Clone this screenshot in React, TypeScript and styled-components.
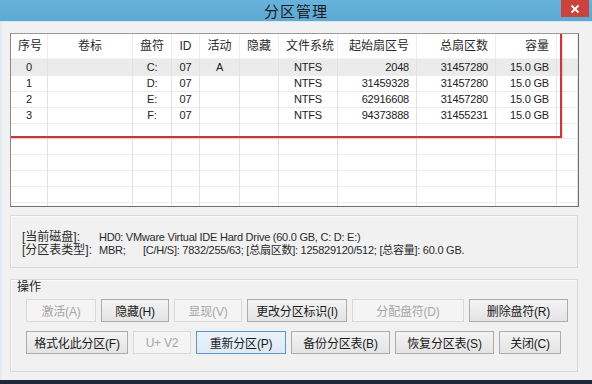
import styled, { createGlobalStyle } from 'styled-components';

const GlobalStyle = createGlobalStyle`
  body {
    margin: 0;
    background: #f0f0f0;
    font-family: 'Liberation Sans', 'Noto Sans CJK SC', sans-serif;
  }
`;

type Align = 'left' | 'center' | 'right';

const columns: { title: string; width: string; head: Align; cell: Align }[] = [
  { title: '序号', width: '37px', head: 'left', cell: 'center' },
  { title: '卷标', width: '85px', head: 'center', cell: 'center' },
  { title: '盘符', width: '39px', head: 'center', cell: 'center' },
  { title: 'ID', width: '28px', head: 'center', cell: 'center' },
  { title: '活动', width: '40px', head: 'center', cell: 'center' },
  { title: '隐藏', width: '39px', head: 'center', cell: 'center' },
  { title: '文件系统', width: '59px', head: 'center', cell: 'center' },
  { title: '起始扇区号', width: '79px', head: 'right', cell: 'right' },
  { title: '总扇区数', width: '79px', head: 'right', cell: 'right' },
  { title: '容量', width: '61px', head: 'right', cell: 'right' },
  { title: '', width: '1fr', head: 'left', cell: 'left' },
];

const gridCols = columns.map((c) => c.width).join(' ');

const partitions = [
  ['0', '', 'C:', '07', 'A', '', 'NTFS', '2048', '31457280', '15.0 GB', ''],
  ['1', '', 'D:', '07', '', '', 'NTFS', '31459328', '31457280', '15.0 GB', ''],
  ['2', '', 'E:', '07', '', '', 'NTFS', '62916608', '31457280', '15.0 GB', ''],
  ['3', '', 'F:', '07', '', '', 'NTFS', '94373888', '31455231', '15.0 GB', ''],
];

const emptyRows = 6;

const App = () => {
  return (
    <>
      <GlobalStyle />
      <Window>
        <TitleBar>
          <span />
          <Title>分区管理</Title>
          <CloseButton>
            <svg width="10" height="10" viewBox="0 0 10 10">
              <path d="M1.5 1.5 L8.5 8.5 M8.5 1.5 L1.5 8.5" stroke="#fff" strokeWidth="1.8" />
            </svg>
          </CloseButton>
        </TitleBar>
        <Body>
          <ListView>
            <HeaderRow>
              {columns.map((c, i) => (
                <HeadCell key={i} $align={c.head}>
                  {c.title}
                </HeadCell>
              ))}
            </HeaderRow>
            {partitions.map((row, r) => (
              <Row key={r} $selected={r === 0}>
                {row.map((v, i) => (
                  <Cell key={i} $align={columns[i].cell}>
                    {v}
                  </Cell>
                ))}
              </Row>
            ))}
            {Array.from({ length: emptyRows }).map((_, r) => (
              <Row key={'e' + r}>
                {columns.map((c, i) => (
                  <Cell key={i} $align={c.cell} />
                ))}
              </Row>
            ))}
            <Highlight />
          </ListView>

          <InfoGroup>
            <InfoLine>
              <InfoLabel>[当前磁盘]:</InfoLabel>
              <span>HD0: VMware Virtual IDE Hard Drive (60.0 GB, C: D: E:)</span>
            </InfoLine>
            <InfoLine>
              <InfoLabel>[分区表类型]:</InfoLabel>
              <InfoShort>MBR;</InfoShort>
              <span>[C/H/S]: 7832/255/63; [总扇区数]: 125829120/512; [总容量]: 60.0 GB.</span>
            </InfoLine>
          </InfoGroup>

          <OpsGroup>
            <Caption>操作</Caption>
            <ButtonRow>
              <Button $w={70} disabled>激活(A)</Button>
              <Button $w={68}>隐藏(H)</Button>
              <Button $w={68} disabled>显现(V)</Button>
              <Button $w={100}>更改分区标识(I)</Button>
              <Button $w={112} disabled>分配盘符(D)</Button>
              <Button $w={99}>删除盘符(R)</Button>
            </ButtonRow>
            <ButtonRow>
              <Button $w={102}>格式化此分区(F)</Button>
              <Button $w={58} disabled>U+ V2</Button>
              <Button $w={90} $focused>重新分区(P)</Button>
              <Button $w={99}>备份分区表(B)</Button>
              <Button $w={99}>恢复分区表(S)</Button>
              <Button $w={62}>关闭(C)</Button>
            </ButtonRow>
          </OpsGroup>
        </Body>
        <TaskStrip />
      </Window>
    </>
  );
};

export default App;

const Window = styled.div`
  width: 592px;
  height: 384px;
  display: flex;
  flex-direction: column;
  background: #f1f1f1;
  overflow: hidden;
  box-shadow: inset 2px 0 0 #e2ebf1;
`;

const TitleBar = styled.div`
  height: 21px;
  flex-shrink: 0;
  display: grid;
  grid-template-columns: 1fr auto 1fr;
  align-items: center;
  background: linear-gradient(#66b3dc, #5ea9d3);
  border-bottom: 1px solid #d8e8f2;
`;

const Title = styled.div`
  font-family: 'Noto Sans CJK SC', sans-serif;
  font-size: 15px;
  color: #1c1c1c;
  line-height: 21px;
  letter-spacing: 1px;
`;

const CloseButton = styled.div`
  justify-self: end;
  align-self: start;
  width: 28px;
  height: 17px;
  margin-right: 3px;
  background: #c9443c;
  display: flex;
  align-items: center;
  justify-content: center;
`;

const Body = styled.div`
  flex: 1;
  display: flex;
  flex-direction: column;
  padding: 11px 13px 0 10px;
`;

const ListView = styled.div`
  position: relative;
  height: 174px;
  width: 569px;
  box-sizing: border-box;
  background: #fff;
  border: 1px solid #6e6e6e;
  border-top-color: #9a9a9a;
  border-left-color: #8a8a8a;
  overflow: hidden;
`;

const HeaderRow = styled.div`
  display: grid;
  grid-template-columns: ${gridCols};
  height: 24px;
  border-bottom: 1px solid #f3f3f3;
`;

const HeadCell = styled.div<{ $align: Align }>`
  font-size: 12px;
  color: #2a2a2a;
  line-height: 24px;
  padding: 0 7px;
  text-align: ${(p) => p.$align};
  border-right: 1px solid #ececec;
  white-space: nowrap;
`;

const Row = styled.div<{ $selected?: boolean }>`
  display: grid;
  grid-template-columns: ${gridCols};
  height: 16px;
  background: ${(p) => (p.$selected ? '#ebebeb' : 'transparent')};
`;

const Cell = styled.div<{ $align: Align }>`
  font-size: 11px;
  letter-spacing: -0.2px;
  color: #222;
  line-height: 16px;
  padding: 0 7px;
  text-align: ${(p) => p.$align};
  border-right: 1px solid #e2e2e2;
  border-bottom: 1px solid #ececec;
  white-space: nowrap;
`;

const Highlight = styled.div`
  position: absolute;
  left: -2px;
  top: -2px;
  width: 553px;
  height: 106px;
  box-sizing: border-box;
  border: 2px solid #c8383a;
  box-shadow: 0 0 2px rgba(210, 70, 70, 0.6);
  pointer-events: none;
`;

const GroupBox = styled.div`
  width: 568px;
  box-sizing: border-box;
  border: 1px solid #d9d9d9;
  box-shadow: inset 1px 1px 0 #fbfbfb;
`;

const InfoGroup = styled(GroupBox)`
  margin-top: 8px;
  height: 53px;
  padding: 15px 11px 0;
`;

const InfoLine = styled.div`
  display: flex;
  font-size: 11px;
  letter-spacing: -0.25px;
  line-height: 13px;
  color: #2a2a2a;
  white-space: nowrap;
`;

const InfoLabel = styled.span`
  width: 77px;
  flex-shrink: 0;
  font-size: 12px;
  letter-spacing: 0;
`;

const InfoShort = styled.span`
  width: 44px;
  flex-shrink: 0;
`;

const OpsGroup = styled(GroupBox)`
  margin-top: 11px;
  height: 93px;
  padding: 0 0 0 15px;
  display: flex;
  flex-direction: column;
`;

const Caption = styled.div`
  font-family: 'Noto Sans CJK SC', sans-serif;
  font-size: 12px;
  color: #222;
  line-height: 12px;
  margin: 0 0 7px -9px;
`;

const ButtonRow = styled.div`
  display: flex;
  gap: 5px;
  margin-bottom: 9px;
`;

const Button = styled.button<{ $w: number; $focused?: boolean }>`
  width: ${(p) => p.$w}px;
  height: 23px;
  padding: 0;
  font-family: 'Liberation Sans', 'Noto Sans CJK SC', sans-serif;
  font-size: 12px;
  letter-spacing: -0.2px;
  color: #1a1a1a;
  border: 1px solid ${(p) => (p.$focused ? '#5b97c7' : '#acacac')};
  background: ${(p) =>
    p.$focused ? 'linear-gradient(#eaf3fb, #dde9f5)' : 'linear-gradient(#f3f3f3, #e4e4e4)'};
  white-space: nowrap;

  &:disabled {
    color: #a6a6a6;
    border-color: #dadada;
    background: #f4f4f4;
  }
`;

const TaskStrip = styled.div`
  height: 4px;
  flex-shrink: 0;
  background: #1d2838;
`;
